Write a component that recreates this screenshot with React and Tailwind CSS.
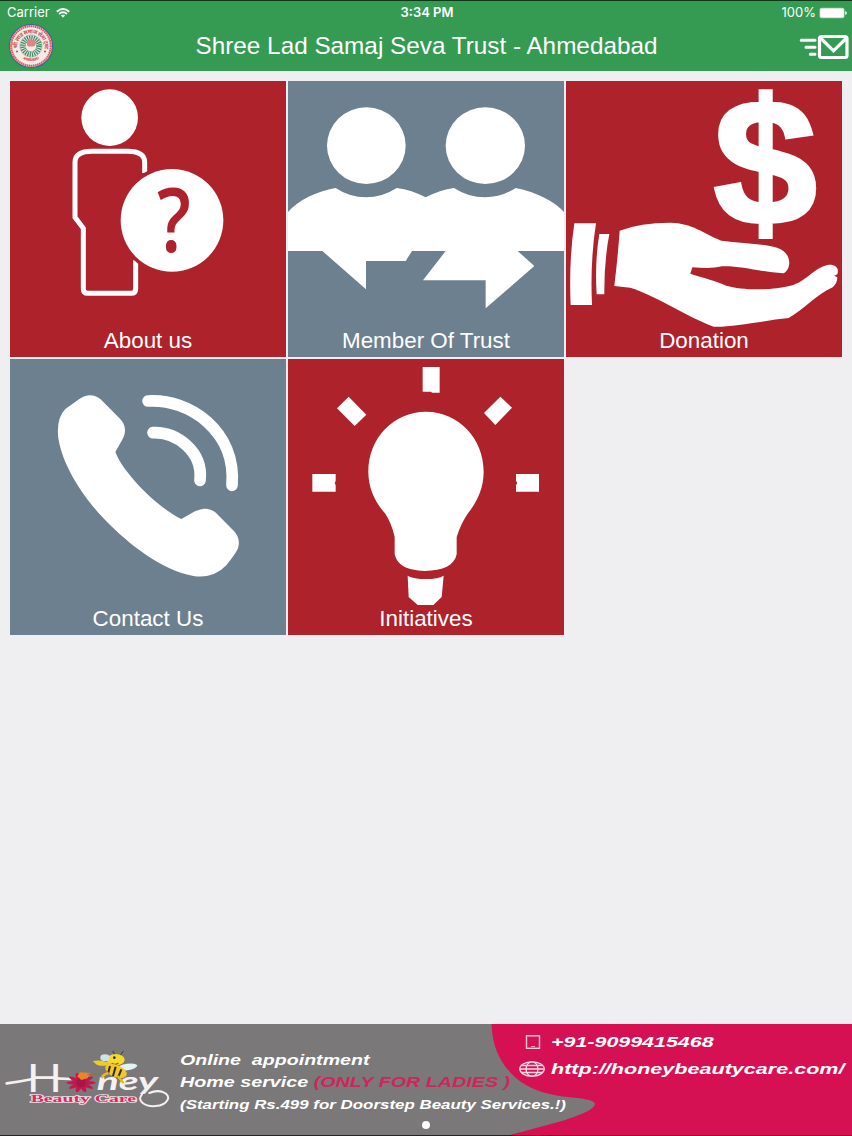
import clsx from 'clsx';

const AboutIcon = () => (
    <svg viewBox="30 18 828 828" className="block h-full w-full" fill="#fff">
        <circle cx="329" cy="128" r="85" />
        <path
            d="M434 294V262Q434 229 382 229H276Q225 229 225 262V427L250 460V642Q250 655 263 655H394Q407 655 407 642V556"
            fill="none"
            stroke="#fff"
            strokeWidth="15"
        />
        <circle cx="516" cy="436" r="165" fill="#ae222c" />
        <circle cx="516" cy="436" r="154" />
        <text
            transform="translate(522 531) scale(0.84 1)"
            textAnchor="middle"
            fontSize="266"
            fontWeight="600"
            fill="#ae222c"
            fontFamily="'Open Sans', sans-serif"
        >
            ?
        </text>
    </svg>
);

const MembersIcon = () => (
    <svg viewBox="9 18 828 828" className="block h-full w-full" fill="#fff">
        <ellipse cx="244" cy="212" rx="118" ry="115" />
        <ellipse cx="601" cy="212" rx="119" ry="115" />
        <path d="M9 411C40 375 95 350 152 339Q194 367 243 367Q292 367 335 339Q380 345 422 367Q465 345 507 339Q550 367 600 367Q650 367 692 339C755 352 810 380 837 411V528H698L748 573L602 700V616H414L482 528H381L362 558H243V643L112 528H9Z" />
    </svg>
);

const DonationIcon = () => (
    <svg viewBox="12 18 828 828" className="block h-full w-full overflow-visible" fill="#fff">
        <text
            transform="translate(610 446) scale(1.04 1)"
            textAnchor="middle"
            fontSize="534"
            fontWeight="700"
            stroke="#fff"
            strokeWidth="12"
            fontFamily="'Liberation Sans', Arial, sans-serif"
        >
            $
        </text>
        <path d="M37 445H102Q84 560 90 690H26Q20 560 37 445Z" />
        <path d="M112 477H142Q126 560 127 658H104Q98 560 112 477Z" />
        <path d="M173 467Q235 443 325 443C390 444 425 475 478 497C540 505 600 505 645 518C690 532 690 580 665 595C590 590 535 572 480 574C445 582 420 578 391 577L385 596C430 610 460 617 493 632C540 645 620 648 685 632C735 620 750 580 800 569C822 568 832 580 826 598L817 602L826 607Q826 625 812 637C760 660 725 705 680 729Q640 732 600 740C555 746 490 757 455 755C400 735 340 700 285 672Q235 647 205 638L157 633Q167 550 173 467Z" />
    </svg>
);

const ContactIcon = () => (
    <svg viewBox="30 12 828 828" className="block h-full w-full" fill="#fff">
        <path d="M196 162L237 133Q271 108 302 133L360 191Q384 217 370 248L346 291C370 355 475 460 544 492L585 469Q620 452 646 472L701 527Q723 549 714 580Q708 595 679 631Q640 672 580 663C480 645 380 560 325 505C265 445 190 345 175 250Q168 190 196 162Z" />
        <path d="M444 138C570 130 710 230 696 391" fill="none" stroke="#fff" strokeWidth="35" strokeLinecap="round" />
        <path d="M459 233C530 230 610 290 600 376" fill="none" stroke="#fff" strokeWidth="35" strokeLinecap="round" />
    </svg>
);

const InitiativesIcon = () => (
    <svg viewBox="9 12 828 828" className="block h-full w-full" fill="#fff">
        <path d="M413 36H464V113H441L438 110H413Z" />
        <path d="M191 125L244 179L209 213L156 160Z" />
        <path d="M646 125L681 158L631 210L597 174Z" />
        <path d="M82 357H152V378L149 384L152 391V410H82Z" />
        <path d="M693 357H762V410H693V391L697 384L693 378Z" />
        <path d="M423 170C520 170 596 250 596 350C596 400 576 440 549 475Q528 505 515 546V598C508 632 475 647 419 648C365 645 338 632 329 598V546Q320 505 300 475C270 440 250 400 250 350C250 250 325 170 423 170Z" />
        <path d="M368 662Q385 672 423 672Q460 672 476 662L470 726L445 750H398L371 726Z" />
    </svg>
);

const TILES = [
    { label: 'About us', Icon: AboutIcon, bg: 'bg-[#ae222c]' },
    { label: 'Member Of Trust', Icon: MembersIcon, bg: 'bg-[#6d808f]' },
    { label: 'Donation', Icon: DonationIcon, bg: 'bg-[#ae222c]' },
    { label: 'Contact Us', Icon: ContactIcon, bg: 'bg-[#6d808f]' },
    { label: 'Initiatives', Icon: InitiativesIcon, bg: 'bg-[#ae222c]' },
];

const Tile = ({ label, Icon, bg }) => (
    <button type="button" className={clsx('relative h-[276px]', bg)}>
        <Icon />
        <span className="absolute inset-x-0 bottom-[3px] text-center text-[22.4px] leading-[26px] text-white">
            {label}
        </span>
    </button>
);

// Round trust seal with the spoked wheel
const TrustSeal = () => (
    <svg viewBox="0 0 46 46" className="h-[46px] w-[46px]">
        <circle cx="23" cy="23" r="21.6" fill="#f6e9e6" stroke="#41659a" strokeWidth="1.2" />
        <circle cx="23" cy="23" r="19.8" fill="none" stroke="#d4605a" strokeWidth="2.2" strokeDasharray="1.6 0.5" />
        <circle cx="23" cy="23" r="8" fill="none" stroke="#3f8a62" strokeWidth="5.6" strokeDasharray="1.2 0.9" />
        <circle cx="23" cy="23" r="11.2" fill="none" stroke="#6fa68a" strokeWidth="0.5" />
        <rect x="19" y="17" width="8.4" height="6.4" rx="2" fill="#dd8586" />
        <path id="seal-top" d="M9.5 27A13.8 13.8 0 1 1 36.5 27" fill="none" />
        <text fontSize="5.6" fontWeight="700" fill="#c94f50" fontFamily="'Noto Sans', sans-serif">
            <textPath href="#seal-top" startOffset="50%" textAnchor="middle" textLength="46">
                श्री लाड समाज सेवा ट्रस्ट
            </textPath>
        </text>
        <path id="seal-bottom" d="M10 31A15.6 15.6 0 0 0 36 31" fill="none" />
        <text fontSize="3.6" fontWeight="700" fill="#c94f50" fontFamily="'Liberation Sans', sans-serif">
            <textPath href="#seal-bottom" startOffset="50%" textAnchor="middle" textLength="17">
                AHMEDABAD
            </textPath>
        </text>
        <circle cx="9" cy="28.5" r="1" fill="#4a7f74" />
        <circle cx="37" cy="28.5" r="1" fill="#4a7f74" />
    </svg>
);

const WifiIcon = () => (
    <svg viewBox="0 0 14 10" className="h-[10px] w-[14px]" fill="none" stroke="#fff" strokeWidth="1.9">
        <path d="M0.8 3.7Q7 -1.7 13.2 3.7" />
        <path d="M3 6Q7 2.6 11 6" />
        <path d="M4.9 7.6Q7 5.9 9.1 7.6L7 9.8Z" fill="#fff" stroke="none" />
    </svg>
);

const BatteryIcon = () => (
    <svg viewBox="0 0 28 12" className="h-[12px] w-[28px]">
        <rect x="0.5" y="0.8" width="25" height="10.4" rx="2" fill="#fff" fillOpacity="0.55" />
        <rect x="1.2" y="1.5" width="23.6" height="9" rx="1.5" fill="#fff" />
        <path d="M26.2 4Q27.8 4.6 27.8 6Q27.8 7.4 26.2 8Z" fill="#fff" />
    </svg>
);

const SendMailIcon = () => (
    <svg viewBox="0 0 50 26" className="mt-[2px] h-[26px] w-[50px]" fill="none" stroke="#fff">
        <path d="M2.2 6.3H16M7 13.3H16M11.3 20.2H16" strokeWidth="3" strokeLinecap="round" />
        <rect x="20.5" y="2.5" width="27.5" height="21" rx="2" strokeWidth="3.2" />
        <path d="M21.5 4L34.5 16.8L47.5 4" strokeWidth="3.2" />
    </svg>
);

const Header = () => (
    <header className="h-[71px] border-t border-[#0c3a14] bg-[#359b53] text-white">
        <div className="grid h-[22px] grid-cols-[1fr_auto_1fr] items-center pt-px pr-[5px] pl-[7px] font-[Inter,sans-serif] text-[13px]">
            <div className="flex items-center gap-[6px]">
                <span>Carrier</span>
                <WifiIcon />
            </div>
            <span className="font-semibold">3:34 PM</span>
            <div className="flex items-center justify-end gap-[3px]">
                <span>100%</span>
                <BatteryIcon />
            </div>
        </div>
        <div className="flex h-[46px] items-center justify-between pr-[3px] pl-2">
            <TrustSeal />
            <h1 className="text-[24.3px] leading-[46px] whitespace-nowrap">
                Shree Lad Samaj Seva Trust - Ahmedabad
            </h1>
            <SendMailIcon />
        </div>
    </header>
);

// "Honey Beauty Care" brand mark: lettering, flower and bee
const HoneyLogo = () => (
    <svg viewBox="0 27 522 333" className="block h-[111px] w-[174px] not-italic">
        <text
            x="80"
            y="230"
            fontSize="114"
            fontWeight="400"
            textLength="106"
            lengthAdjust="spacingAndGlyphs"
            fill="#f4f1f1"
            fontFamily="Lato, sans-serif"
        >
            H
        </text>
        <path d="M20 205Q60 200 98 192M166 190L212 192" fill="none" stroke="#f4f1f1" strokeWidth="8" strokeLinecap="round" />
        <text
            x="290"
            y="226"
            fontSize="72"
            fontStyle="italic"
            fontWeight="700"
            textLength="184"
            lengthAdjust="spacingAndGlyphs"
            fill="#f4f1f1"
            fontFamily="Lato, sans-serif"
        >
            ney
        </text>
        <path
            d="M448 234C480 220 512 236 503 254C490 278 445 278 427 263Q414 252 426 238"
            fill="none"
            stroke="#f4f1f1"
            strokeWidth="6"
            strokeLinecap="round"
        />
        {[0, 36, 72, 108, 144].map((angle) => (
            <ellipse
                key={angle}
                cx="243"
                cy="203"
                rx="38"
                ry="8"
                fill="#c4174f"
                transform={`translate(243 203) scale(1.15 0.8) rotate(${angle}) translate(-243 -203)`}
            />
        ))}
        <circle cx="243" cy="203" r="14" fill="#a81546" />
        <path d="M240 172L272 174L262 190L244 195L232 184Z" fill="#ee8426" />
        <path d="M262 178L318 174" stroke="#b4642e" strokeWidth="3" />
        <path d="M345 119L338 108M362 119L370 108" stroke="#3d3730" strokeWidth="3" />
        <ellipse cx="382" cy="156" rx="30" ry="10" fill="#e4f1f5" transform="rotate(-8 382 156)" />
        <ellipse cx="347" cy="134" rx="27" ry="17" fill="#f4da2c" />
        <ellipse cx="315" cy="128" rx="14" ry="10" fill="#cce3ea" />
        <path d="M278 138Q305 132 340 147Q310 157 290 149Z" fill="#f0cb26" />
        <path d="M335 145Q345 152 355 144" stroke="#bc3b20" strokeWidth="4" fill="none" />
        <circle cx="343" cy="128" r="4" fill="#2f2a22" />
        <ellipse cx="348" cy="168" rx="34" ry="18" fill="#f0c928" transform="rotate(22 348 168)" />
        <path d="M330 153L324 176M347 155L339 183M364 163L354 188" stroke="#2d2822" strokeWidth="6" />
        <path d="M326 174Q308 178 305 190M353 183L371 205" stroke="#e6ba27" strokeWidth="7" fill="none" />
        <text
            x="92"
            y="260"
            fontSize="34"
            fontWeight="700"
            textLength="316"
            lengthAdjust="spacingAndGlyphs"
            fill="#d42c64"
            stroke="#f6dde5"
            strokeWidth="5"
            paintOrder="stroke"
            fontFamily="'Liberation Serif', serif"
        >
            Beauty Care
        </text>
    </svg>
);

const PhoneIcon = () => (
    <svg viewBox="0 0 26 16" className="h-4 w-[26px]" fill="none" stroke="#f7c9d9">
        <rect x="7.5" y="1.8" width="13" height="12.5" strokeWidth="1.4" />
        <path d="M12 12.5H16" strokeWidth="0.8" />
    </svg>
);

const GlobeIcon = () => (
    <svg viewBox="0 0 26 16" className="h-4 w-[26px]" fill="none" stroke="#fadbe6" strokeWidth="1.3">
        <ellipse cx="13" cy="8" rx="12.2" ry="7.2" />
        <ellipse cx="13" cy="8" rx="6" ry="7.2" />
        <path d="M1 8H25M3 4.5H23M3 11.5H23" />
    </svg>
);

const AdBanner = () => (
    <footer className="relative h-[112px] overflow-hidden border-b border-[#272327] bg-[#7a7879] font-['Liberation_Sans',Arial,sans-serif] font-bold text-white italic">
        <svg viewBox="0 0 852 111" className="absolute inset-0 h-[111px] w-full" fill="#d51154">
            <path d="M491.5 0C492 20 499 36 509 47C522 62 540 70 568 73C580 74 595 76 595 80C594 86 580 91 562 97L510 111H852V0Z" />
        </svg>
        <div className="relative flex">
            <HoneyLogo />
            <div className="flex w-[340px] flex-col pt-[25px] pl-[5.5px] whitespace-pre">
                <p className="h-[22px] origin-left scale-x-[1.4] self-start text-[14px] leading-[22px]">
                    Online  appointment
                </p>
                <p className="h-[22px] origin-left scale-x-[1.37] self-start text-[14.4px] leading-[22px]">
                    Home service <span className="text-[#d0255c]">(ONLY FOR LADIES )</span>
                </p>
                <p className="h-[23px] origin-left scale-x-[1.3] self-start text-[13px] leading-[23px]">
                    (Starting Rs.499 for Doorstep Beauty Services.!)
                </p>
            </div>
            <div className="flex flex-col gap-[11px] pt-[10px] pl-[5px] whitespace-nowrap">
                <div className="flex items-center gap-[6px]">
                    <PhoneIcon />
                    <span className="origin-left scale-x-[1.53] text-[14px] leading-4">+91-9099415468</span>
                </div>
                <div className="flex items-center gap-[6px]">
                    <GlobeIcon />
                    <span className="origin-left scale-x-[1.54] text-[14px] leading-4">http://honeybeautycare.com/</span>
                </div>
            </div>
        </div>
        <span className="absolute top-[97px] left-[422px] h-2 w-2 rounded-full bg-white" />
    </footer>
);

export default function App() {
    return (
        <div className="flex h-[1136px] w-[852px] flex-col bg-[#efeef0] font-['Liberation_Sans',Arial,sans-serif]">
            <Header />
            <main className="flex-1 p-[10px]">
                <div className="grid grid-cols-3 gap-0.5">
                    {TILES.map((tile) => (
                        <Tile key={tile.label} {...tile} />
                    ))}
                </div>
            </main>
            <AdBanner />
        </div>
    );
}
